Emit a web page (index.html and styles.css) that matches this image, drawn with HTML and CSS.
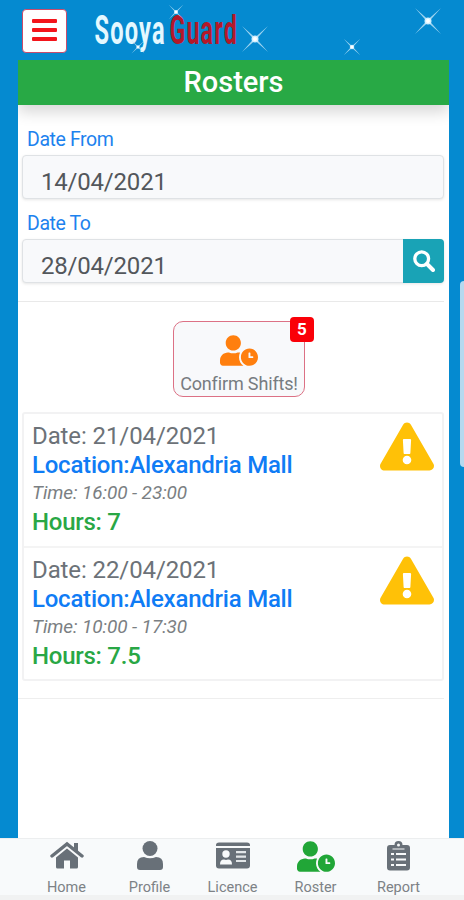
FILE: index.html
```html
<!DOCTYPE html>
<html lang="en">
<head>
<meta charset="utf-8">
<title>SooyaGuard – Rosters</title>
<link rel="stylesheet" href="styles.css">
</head>
<body>
<svg class="defs" width="0" height="0" aria-hidden="true">
  <symbol id="user-clock" viewBox="0 0 640 512"><path d="M496 224c-79.600 0-144 64.400-144 144s64.400 144 144 144 144-64.400 144-144-64.400-144-144-144zm64 150.300c0 5.300-4.400 9.700-9.700 9.700h-60.600c-5.300 0-9.700-4.400-9.700-9.700v-76.600c0-5.300 4.400-9.700 9.700-9.700h12.600c5.300 0 9.700 4.400 9.700 9.700V352h38.300c5.300 0 9.700 4.400 9.700 9.700v12.600zM320 368c0-27.800 6.700-54.100 18.200-77.500-8-1.500-16.200-2.500-24.600-2.500h-16.700c-22.200 10.200-46.900 16-72.900 16s-50.600-5.800-72.900-16h-16.700C60.200 288 0 348.200 0 422.400V464c0 26.500 21.500 48 48 48h347.100c-45.300-31.900-75.100-84.500-75.100-144zm-96-112c70.700 0 128-57.300 128-128S294.700 0 224 0 96 57.300 96 128s57.300 128 128 128z"/></symbol>
  <symbol id="warning" viewBox="0 0 576 512"><path d="M569.500 440C588 472 564.800 512 527.900 512H48.100c-36.900 0-60-40.100-41.600-72L246.400 24c18.500-32 64.700-32 83.200 0l239.900 416zM288 354c-25.400 0-46 20.600-46 46s20.600 46 46 46 46-20.600 46-46-20.600-46-46-46zm-43.700-165.300 7.400 136c.3 6.400 5.600 11.300 12 11.300h48.500c6.400 0 11.600-5 12-11.300l7.400-136c.4-6.900-5.100-12.700-12-12.700h-63.400c-6.900 0-12.300 5.800-11.900 12.700z"/></symbol>
  <symbol id="star" viewBox="-14 -14 28 28"><path d="M-13-13 0-1.500 13-13 1.500 0 13 13 0 1.500-13 13-1.500 0z" fill="#b9e0f6" opacity=".85"/><circle r="3.500" fill="#d2effe"/><circle r="2" fill="#fff"/></symbol>
</svg>
<div class="app">
  <header class="header">
    <button class="menu" aria-label="Menu"><span></span><span></span><span></span></button>
    <svg class="sky" width="380" height="60" viewBox="84 0 380 60">
      <text class="logo logo-light" transform="translate(94.500 44) scale(.59 1)">Sooya</text>
      <text class="logo logo-red" transform="translate(169.500 44) scale(.58 1)">Guard</text>
      <use href="#star" x="168" y="4" width="16" height="16"/>
      <use href="#star" x="131" y="40" width="14" height="14"/>
      <use href="#star" x="241" y="25" width="28" height="28"/>
      <use href="#star" x="343" y="38" width="18" height="18"/>
      <use href="#star" x="414" y="7" width="28" height="28"/>
    </svg>
  </header>
  <main class="page">
    <h1 class="title">Rosters</h1>
    <form class="filters">
      <label>Date From</label>
      <div class="field"><span>14/04/2021</span></div>
      <label>Date To</label>
      <div class="field"><span>28/04/2021</span>
        <button type="button" class="search" aria-label="Search"><svg width="22" height="22" viewBox="0 0 22 22"><circle cx="8.700" cy="8.700" r="6.900" fill="none" stroke="#fff" stroke-width="3.300"/><path d="m14 14 6 6" stroke="#fff" stroke-width="4" stroke-linecap="round"/></svg></button>
      </div>
    </form>
    <section class="confirm-row">
      <button class="confirm"><svg width="38" height="31"><use href="#user-clock"/></svg><span class="confirm-text">Confirm Shifts!</span><b class="badge">5</b></button>
    </section>
    <section class="shifts">
      <article class="shift">
        <div><p class="date">Date: 21/04/2021</p><p class="place">Location:Alexandria Mall</p><p class="time">Time: 16:00 - 23:00</p><p class="hours">Hours: 7</p></div>
        <svg class="warn" width="54" height="49"><use href="#warning"/></svg>
      </article>
      <article class="shift">
        <div><p class="date">Date: 22/04/2021</p><p class="place">Location:Alexandria Mall</p><p class="time">Time: 10:00 - 17:30</p><p class="hours">Hours: 7.5</p></div>
        <svg class="warn" width="54" height="49"><use href="#warning"/></svg>
      </article>
    </section>
  </main>
  <nav class="nav">
    <a><svg width="34" height="31" viewBox="0 0 34 31"><path d="M2 15 17 3l15 12" fill="none" stroke="currentColor" stroke-width="3.400" stroke-linecap="round"/><path d="M24 2h4v9l-4-3zM6 16.500 17 7.500l11 9V26q0 1.500-1.500 1.500H20v-8h-6v8H7.500Q6 27.500 6 26z" fill="currentColor"/></svg><span>Home</span></a>
    <a><svg width="26" height="31" viewBox="0 0 26 31"><circle cx="13" cy="7.500" r="7.500" fill="currentColor"/><path d="M0 26v-3q0-7 7-7 6 2.500 12 0 7 0 7 7v3q0 3-3 3H3q-3 0-3-3z" fill="currentColor"/></svg><span>Profile</span></a>
    <a><svg width="34" height="31" viewBox="0 0 34 31"><path d="M0 5V4q0-2.500 3-2.500h28q3 0 3 2.500v1zM0 7h34v17.500q0 3-3 3H3q-3 0-3-3z" fill="currentColor"/><g fill="#f8fafb"><circle cx="10" cy="13" r="3.700"/><path d="M4 23.500q0-5 4-5 2 .8 4 0 4 0 4 5z"/><path d="M20 10h10v2.300H20zM20 14.500h10v2.300H20zM20 19h10v2H20z" opacity=".85"/></g></svg><span>Licence</span></a>
    <a class="active"><svg width="38" height="31"><use href="#user-clock"/></svg><span>Roster</span></a>
    <a><svg width="23" height="31" viewBox="0 0 23 31"><path fill-rule="evenodd" d="M3 4h4.500a4 4 0 0 1 8 0H20q3 0 3 3v19.500q0 3-3 3H3q-3 0-3-3V7q0-3 3-3zm8.500-1.500a1.500 1.500 0 1 0 0 3 1.500 1.500 0 0 0 0-3z" fill="currentColor"/><path d="M5.500 8h12" stroke="#f8fafb" stroke-width="1"/><path d="M4 13h3m2 0h10M4 18.500h3m2 0h10M4 24h3m2 0h10" stroke="#f8fafb" stroke-width="2"/></svg><span>Report</span></a>
  </nav>
  <div class="handle"></div>
</div>
</body>
</html>
```

FILE: styles.css
```css
* { box-sizing: border-box; }
body { margin: 0; font-family: Roboto, "Liberation Sans", sans-serif; }
p, h1 { margin: 0; }
button { font: inherit; padding: 0; }
.defs { position: absolute; }
.app { position: relative; width: 464px; height: 900px; overflow: hidden; background: #058ad0; display: flex; flex-direction: column; }
.header { height: 60px; display: flex; flex: none; }
.menu { width: 45px; height: 44px; margin: 9px 17px 0 22px; border: 1px solid #c94b6c; border-radius: 4px; background: #fff; display: flex; flex-direction: column; align-items: center; padding-top: 9px; gap: 5px; }
.menu span { width: 25px; height: 4px; border-radius: 1px; background: #f3151b; }
.sky { display: block; }
.logo { font: 700 40px Roboto, sans-serif; letter-spacing: 2px; }
.logo-light { fill: #e4f8ff; }
.logo-red { fill: #b3182a; }
.page { flex: 1; margin: 0 15px 0 18px; background: #fff; min-height: 0; }
.title { height: 45px; background: #28a945; color: #fff; font-size: 29px; font-weight: 500; line-height: 44px; text-align: center; box-shadow: 0 7px 14px rgba(0,0,0,.16); clip-path: inset(0 0 -24px 0); }
.filters { padding: 20px 0 0 4px; height: 197px; margin-right: 5px; border-bottom: 1px solid #e9e9e9; }
.filters label { display: block; height: 30px; padding-left: 5px; color: #1d82ee; font-size: 19.500px; line-height: 30px; letter-spacing: -.4px; }
.field { height: 44px; margin-bottom: 10px; border: 1px solid #dfe2e5; border-radius: 4px; background: #f8f9fb; color: #53575b; font-size: 24px; line-height: 52px; letter-spacing: -.2px; display: flex; justify-content: space-between; box-shadow: 0 1px 3px rgba(0,0,0,.1); }
.field span { padding-left: 18px; }
.search { width: 41px; height: 44px; margin: -1px -1px 0 0; border: 0; border-radius: 0 4px 4px 0; background: #19a3b6; display: flex; align-items: center; justify-content: center; }
.confirm-row { height: 110px; padding: 19px 0 0 155px; }
.confirm { position: relative; width: 132px; height: 76px; border: 1px solid #dc7185; border-radius: 10px; background: #f8f9fb; color: #ff7f0e; display: flex; flex-direction: column; align-items: center; padding-top: 13px; }
.confirm svg { fill: currentColor; flex: none; }
.confirm-text { color: #777c81; font-size: 18px; line-height: 22px; letter-spacing: -.15px; margin-top: 7px; white-space: nowrap; }
.badge { position: absolute; top: -5px; right: -10px; width: 24px; height: 25px; border-radius: 4px; background: #fa0008; color: #fff; font-size: 17px; line-height: 25px; text-align: center; }
.shifts { margin: 0 5px 0 4px; height: 269px; border: 2px solid #f2f2f3; border-radius: 3px; }
.shift { height: 132px; padding: 8px 8px 0; display: flex; justify-content: space-between; font-size: 24px; line-height: 28.700px; }
.shift + .shift { border-top: 2px solid #f4f4f4; }
.warn { fill: #ffc107; }
.date { color: #6c7278; letter-spacing: -.1px; }
.place { color: #0f7cf5; font-weight: 500; letter-spacing: -.23px; }
.time { color: #7b7f83; font-size: 19px; font-style: italic; letter-spacing: -.1px; }
.hours { color: #29a745; font-weight: 500; letter-spacing: -.25px; }
.page::after { content: ""; display: block; margin: 17px 5px 0 0; border-top: 1px solid #eee; }
.nav { height: 62px; flex: none; background: #f8fafb; border-top: 1px solid #eceeef; border-bottom: 5px solid #f1f2f2; padding: 0 24px 0 25px; display: grid; grid-template-columns: repeat(5, 1fr); color: #687078; }
.nav a { display: flex; flex-direction: column; align-items: center; padding-top: 2px; }
.nav svg { fill: currentColor; display: block; }
.nav .active svg { color: #21a637; }
.nav span { font-size: 14.500px; line-height: 20px; margin-top: 6px; color: #7d8286; }
.handle { position: absolute; left: 460px; top: 281px; width: 8px; height: 186px; border-radius: 4px; background: #b5d9ef; }
```
